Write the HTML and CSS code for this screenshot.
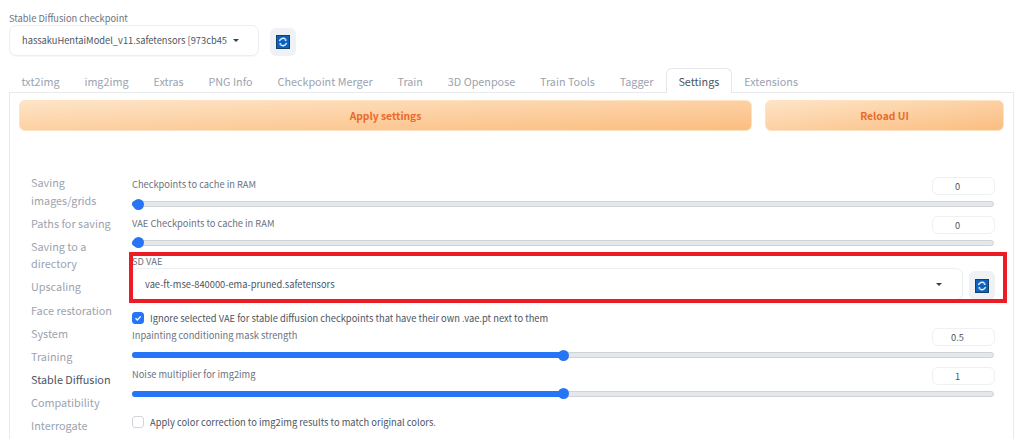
FILE: index.html
```html
<!DOCTYPE html>
<html lang="en">
<head>
<meta charset="utf-8">
<title>Stable Diffusion Settings</title>
<link rel="stylesheet" href="styles.css">
</head>
<body>
<div class="app">
  <div class="ckpt">
    <div class="field-label ckpt-label">Stable Diffusion checkpoint</div>
    <div class="ckpt-row">
      <div class="select ckpt-select"><span>hassakuHentaiModel_v11.safetensors [973cb45</span><i class="caret"></i></div>
      <div class="refresh"><svg class="ricon" viewBox="0 0 14 14"><rect width="14" height="14" fill="#0b63bd"/><rect x=".5" y=".5" width="13" height="13" fill="none" stroke="#123f6c"/><path d="M3.5 6.2A3.6 3.6 0 0 1 9.6 4.4M10.5 7.8A3.6 3.6 0 0 1 4.4 9.6" fill="none" stroke="#e6f1fc" stroke-width="1.4"/><path d="M10.4 3.8V6H8.4zM3.6 10.2V8h2z" fill="#e6f1fc"/></svg></div>
    </div>
  </div>
  <nav class="tabs">
    <span class="tab">txt2img</span><span class="tab">img2img</span><span class="tab">Extras</span><span class="tab">PNG Info</span><span class="tab">Checkpoint Merger</span><span class="tab">Train</span><span class="tab">3D Openpose</span><span class="tab">Train Tools</span><span class="tab">Tagger</span><span class="tab active">Settings</span><span class="tab">Extensions</span>
  </nav>
  <main class="panel">
    <div class="actions">
      <div class="btn btn-apply">Apply settings</div>
      <div class="btn btn-reload">Reload UI</div>
    </div>
    <div class="content">
      <aside class="side">
        <div class="side-item">Saving images/grids</div>
        <div class="side-item">Paths for saving</div>
        <div class="side-item">Saving to a directory</div>
        <div class="side-item">Upscaling</div>
        <div class="side-item">Face restoration</div>
        <div class="side-item">System</div>
        <div class="side-item">Training</div>
        <div class="side-item current">Stable Diffusion</div>
        <div class="side-item">Compatibility</div>
        <div class="side-item">Interrogate</div>
      </aside>
      <section class="settings">
        <div class="row">
          <div class="row-head"><span class="field-label">Checkpoints to cache in RAM</span><span class="num">0</span></div>
          <div class="slider"><div class="fill" style="width:6px"><i class="thumb"></i></div></div>
        </div>
        <div class="row">
          <div class="row-head"><span class="field-label">VAE Checkpoints to cache in RAM</span><span class="num">0</span></div>
          <div class="slider"><div class="fill" style="width:6px"><i class="thumb"></i></div></div>
        </div>
        <div class="vae">
          <div class="field-label vae-label">SD VAE</div>
          <div class="vae-row">
            <div class="select vae-select"><span>vae-ft-mse-840000-ema-pruned.safetensors</span><i class="caret"></i></div>
            <div class="refresh"><svg class="ricon" viewBox="0 0 14 14"><rect width="14" height="14" fill="#0b63bd"/><rect x=".5" y=".5" width="13" height="13" fill="none" stroke="#123f6c"/><path d="M3.5 6.2A3.6 3.6 0 0 1 9.6 4.4M10.5 7.8A3.6 3.6 0 0 1 4.4 9.6" fill="none" stroke="#e6f1fc" stroke-width="1.4"/><path d="M10.4 3.8V6H8.4zM3.6 10.2V8h2z" fill="#e6f1fc"/></svg></div>
          </div>
          <div class="highlight"></div>
        </div>
        <div class="check check-first">
          <span class="box on"><svg viewBox="0 0 12 12"><path d="M3 6.2l2.2 2.2L9.2 4" fill="none" stroke="#fff" stroke-width="1.6"/></svg></span>
          <span class="check-text">Ignore selected VAE for stable diffusion checkpoints that have their own .vae.pt next to them</span>
        </div>
        <div class="row">
          <div class="row-head"><span class="field-label">Inpainting conditioning mask strength</span><span class="num">0.5</span></div>
          <div class="slider"><div class="fill" style="width:431px"><i class="thumb"></i></div></div>
        </div>
        <div class="row">
          <div class="row-head"><span class="field-label">Noise multiplier for img2img</span><span class="num">1</span></div>
          <div class="slider"><div class="fill" style="width:431px"><i class="thumb"></i></div></div>
        </div>
        <div class="check check-last">
          <span class="box"></span>
          <span class="check-text">Apply color correction to img2img results to match original colors.</span>
        </div>
      </section>
    </div>
  </main>
</div>
</body>
</html>
```
FILE: styles.css
```css
* { box-sizing: border-box; }
html, body { margin: 0; height: 439px; overflow: hidden; background: #fff; }
body {
  font-family: "Noto Sans CJK SC", "Noto Sans", sans-serif;
  color: #4b5563;
}
.app { padding: 11.5px 10px 0 9px; }

.field-label { font-size: 9.3px; line-height: 12px; color: #6b7280; display: block; }
.ckpt-row { display: flex; align-items: flex-end; gap: 11px; margin-top: 1.5px; }
.select {
  display: flex; align-items: center; justify-content: space-between;
  background: #fff; border: 1px solid #eceef1; border-radius: 7px;
  font-size: 9.3px; color: #4b5563; box-shadow: 0 1px 1px rgba(0,0,0,.03); white-space: nowrap;
}
.ckpt-select { width: 250px; height: 30.5px; padding: 0 19px 0 12px; }
.caret { width: 0; height: 0; border: 3px solid transparent; border-top: 3.5px solid #374151; border-bottom: 0; flex: none; }
.refresh {
  width: 26px; height: 28px; flex: none; border-radius: 6px; background: #f0f1f4;
  display: flex; align-items: center; justify-content: center;
}
.ricon { width: 14px; height: 14px; display: block; }

.tabs { display: flex; margin-top: 12.5px; height: 25px; position: relative; z-index: 1; }
.tab {
  font-size: 10.8px; line-height: 24px; color: #9ca3af; padding: 0 11.45px; height: 25px;
  border: 1px solid transparent; border-bottom: 0; white-space: nowrap;
}
.tab.active { color: #4b5563; background: #fff; border-color: #e5e7eb; border-radius: 6px 6px 0 0; }

.panel { border: 1px solid #e8eaee; border-bottom: 0; margin-top: -1px; padding: 7px 9px 0; height: 348px; }
.actions { display: flex; gap: 13px; }
.btn {
  height: 31px; border-radius: 6px; border: 1px solid #fde3c3;
  background: linear-gradient(to bottom right, #fee4c6, #fbbd80);
  color: #ea6a2a; font-size: 10.3px; font-weight: 600;
  display: flex; align-items: center; justify-content: center;
}
.btn-apply { width: 733px; }
.btn-reload { width: 239px; }

.content { display: flex; margin-top: 43px; }
.side { width: 90px; margin-left: 12px; margin-right: 11px; flex: none; }
.side-item { font-size: 10.85px; line-height: 17.5px; color: #9ca3af; margin-top: 5.65px; }
.side-item:first-child { margin-top: 0; }
.side-item.current { color: #4b5563; }

.settings { width: 863px; margin-top: 3px; }
.row-head { display: flex; justify-content: space-between; height: 18px; }
.row-head .field-label { line-height: 14px; }
.num {
  width: 63px; height: 18px; border: 1px solid #eef0f2; border-radius: 6px;
  font-size: 9.3px; line-height: 16px; text-align: center; color: #4b5563; padding-right: 12px;
}
.slider {
  position: relative; height: 6px; margin: 6px 1px 8.5px 0;
  background: #e5e7eb; border: 1px solid #cfd2d7; border-radius: 3px;
}
.fill { position: absolute; left: -1px; top: -1px; height: 6px; background: #2575f6; border-radius: 3px; }
.thumb { position: absolute; right: -5.5px; top: -2.5px; width: 11px; height: 11px; border-radius: 50%; background: #2575f6; }

.vae { position: relative; margin-top: 9.5px; }
.vae-label { line-height: 12px; }
.vae-row { display: flex; align-items: flex-end; gap: 6px; margin-top: 1px; }
.vae-select { width: 831px; height: 32px; padding: 0 20px 0 12px; }
.vae-row .refresh { height: 29px; }
.highlight {
  position: absolute; left: -3px; right: -12px; top: -3.5px; bottom: -3px;
  border: 4px solid #ed1c24; pointer-events: none;
}

.check { display: flex; align-items: center; gap: 6px; }
.check-first { margin-top: 12px; margin-bottom: 4px; height: 12px; }
.check-last { margin-top: 19px; height: 12px; }
.box { width: 12px; height: 12px; flex: none; border: 1px solid #d1d5db; border-radius: 3px; background: #fff; display: block; }
.box.on { background: #2575f6; border-color: #2575f6; }
.box svg { display: block; width: 10px; height: 10px; }
.check-text { font-size: 9.35px; line-height: 14px; color: #4b5563; white-space: nowrap; }
```
